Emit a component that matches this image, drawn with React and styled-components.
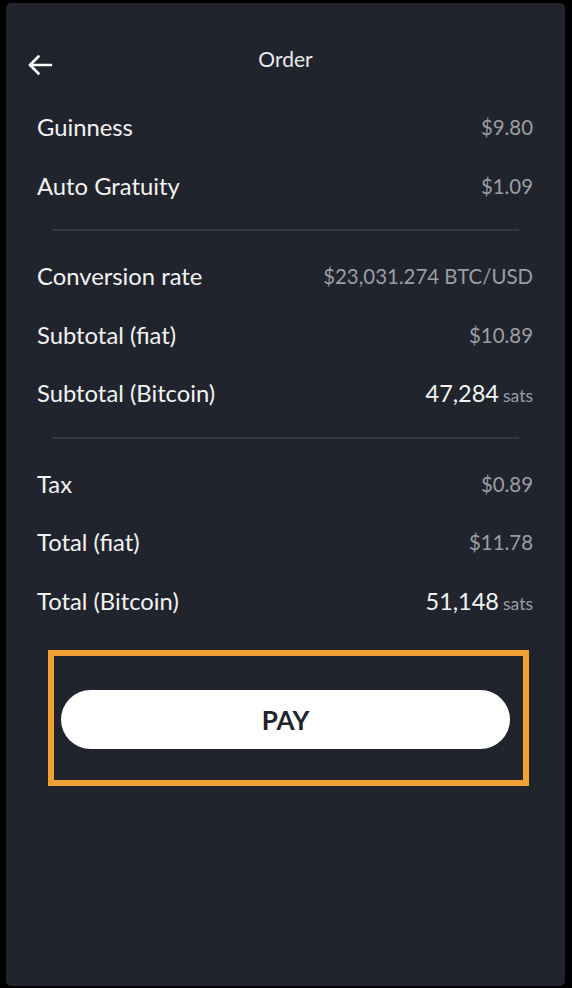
import React from 'react';
import styled, { createGlobalStyle } from 'styled-components';

const GlobalStyle = createGlobalStyle`
    html, body {
        margin: 0;
        padding: 0;
        background: #000;
        font-family: Lato, 'Open Sans', sans-serif;
    }
`;

const Pantalla = styled.div`
    box-sizing: border-box;
    height: 988px;
    padding: 3px 7px 2px 6px;
    background: #000;
`;

const Panel = styled.div`
    height: 100%;
    background: #21242d;
    border-radius: 5px;
    display: flex;
    flex-direction: column;
`;

const Cabecera = styled.div`
    height: 95px;
    display: grid;
    grid-template-columns: 60px 1fr 60px;
    align-items: start;
    padding-top: 43px;
    box-sizing: border-box;
`;

const BotonAtras = styled.button`
    background: none;
    border: none;
    padding: 0;
    margin: 5px 0 0 20px;
    width: 28px;
    height: 28px;
    display: flex;
    align-items: center;
    justify-content: center;
    color: #fff;
`;

const Titulo = styled.h1`
    margin: 0;
    text-align: center;
    font-size: 21px;
    font-weight: 400;
    color: #e8e9eb;
    line-height: 26px;
`;

const Lista = styled.div`
    padding: 0 32px 0 31px;
    display: flex;
    flex-direction: column;
`;

const Fila = styled.div`
    height: 58.5px;
    display: flex;
    align-items: center;
    justify-content: space-between;
`;

const Etiqueta = styled.span`
    font-size: 23.8px;
    color: #f2f2f3;
`;

const Valor = styled.span`
    font-size: 20.4px;
    color: #9b9ea4;
    display: flex;
    align-items: baseline;
    gap: 4px;
`;

const Cifra = styled.span`
    font-size: 23.5px;
    color: #f4f4f5;
`;

const Unidad = styled.span`
    font-size: 17.5px;
    color: #9b9ea4;
`;

const Separador = styled.hr`
    border: none;
    height: 2px;
    background: #353843;
    margin: 14px 14px 16px 15px;
`;

const Marco = styled.div`
    margin: 20px 36px 0 42px;
    height: 136px;
    box-sizing: border-box;
    border: 6px solid #f0a133;
    padding: 3px 13px 0 7px;
    display: flex;
    align-items: center;
`;

const BotonPagar = styled.button`
    width: 100%;
    height: 59px;
    border: none;
    border-radius: 30px;
    background: #fff;
    color: #21242d;
    font-family: Lato, 'Open Sans', sans-serif;
    font-size: 26px;
    font-weight: 700;
    cursor: pointer;
`;

const filas = [
    [
        { etiqueta: 'Guinness', valor: '$9.80' },
        { etiqueta: 'Auto Gratuity', valor: '$1.09' },
    ],
    [
        { etiqueta: 'Conversion rate', valor: '$23,031.274 BTC/USD' },
        { etiqueta: 'Subtotal (fiat)', valor: '$10.89' },
        { etiqueta: 'Subtotal (Bitcoin)', sats: '47,284' },
    ],
    [
        { etiqueta: 'Tax', valor: '$0.89' },
        { etiqueta: 'Total (fiat)', valor: '$11.78' },
        { etiqueta: 'Total (Bitcoin)', sats: '51,148' },
    ],
];

const FilaOrden = ({ etiqueta, valor, sats }) => (
    <Fila>
        <Etiqueta>{etiqueta}</Etiqueta>
        {sats ? (
            <Valor>
                <Cifra>{sats}</Cifra>
                <Unidad>sats</Unidad>
            </Valor>
        ) : (
            <Valor>{valor}</Valor>
        )}
    </Fila>
);

export default function App() {
    return (
        <Pantalla>
            <GlobalStyle />
            <Panel>
                <Cabecera>
                    <BotonAtras aria-label="Volver">
                        <svg width="26" height="22" viewBox="0 0 26 22" fill="none" stroke="#fff" strokeWidth="2.6" strokeLinecap="round" strokeLinejoin="round">
                            <path d="M24 11H3" />
                            <path d="M11.5 2.5L3 11l8.5 8.5" />
                        </svg>
                    </BotonAtras>
                    <Titulo>Order</Titulo>
                </Cabecera>
                <Lista>
                    {filas.map((grupo, i) => (
                        <React.Fragment key={i}>
                            {i > 0 && <Separador />}
                            {grupo.map((f) => (
                                <FilaOrden key={f.etiqueta} {...f} />
                            ))}
                        </React.Fragment>
                    ))}
                </Lista>
                <Marco>
                    <BotonPagar>PAY</BotonPagar>
                </Marco>
            </Panel>
        </Pantalla>
    );
}
